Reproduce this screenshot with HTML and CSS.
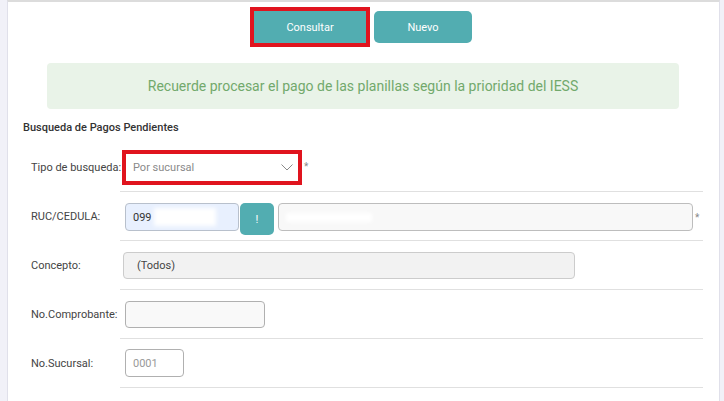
FILE: index.html
```html
<!DOCTYPE html>
<html lang="es">
<head>
<meta charset="utf-8">
<link rel="stylesheet" href="styles.css">
</head>
<body>
<div class="panel">
  <div class="actions">
    <button class="btn btn-main">Consultar</button>
    <button class="btn btn-new">Nuevo</button>
  </div>
  <div class="alert">Recuerde procesar el pago de las planillas según la prioridad del IESS</div>
  <div class="title">Busqueda de Pagos Pendientes</div>
  <div class="form">
    <div class="row">
      <div class="label">Tipo de busqueda:</div>
      <div class="field">
        <div class="select">
          <span>Por sucursal</span>
          <svg class="chev" width="12" height="7" viewBox="0 0 12 7"><path d="M0.5 0.5 L6 6 L11.5 0.5" fill="none" stroke="#8a8a8a" stroke-width="1"/></svg>
        </div>
        <span class="req">*</span>
      </div>
    </div>
    <div class="row">
      <div class="label">RUC/CEDULA:</div>
      <div class="field field-top">
        <div class="inp inp-ruc"><span>099</span><span class="blur blur-a"></span></div>
        <button class="btn btn-bang">!</button>
        <div class="inp inp-name"><span class="blur blur-b"></span></div>
        <span class="req req-2">*</span>
      </div>
    </div>
    <div class="row">
      <div class="label">Concepto:</div>
      <div class="field">
        <div class="inp inp-concepto">(Todos)</div>
      </div>
    </div>
    <div class="row">
      <div class="label">No.Comprobante:</div>
      <div class="field">
        <div class="inp inp-comp"></div>
      </div>
    </div>
    <div class="row">
      <div class="label">No.Sucursal:</div>
      <div class="field">
        <div class="inp inp-suc">0001</div>
      </div>
    </div>
  </div>
</div>
</body>
</html>
```

FILE: styles.css
```css
* { box-sizing: border-box; }
html, body { margin: 0; padding: 0; }
body {
  background: #f1f1f8;
  font-family: Roboto, "Liberation Sans", Arial, sans-serif;
  font-size: 11px;
  color: #444;
  height: 401px;
  overflow: hidden;
}
.panel {
  margin: 0 4px 0 7px;
  background: #fff;
  border-top: 2px solid #dcdcdc;
  border-left: 1px solid #e0e0ea;
  border-right: 1px solid #e0e0ea;
  height: 401px;
  padding: 0 16px 0 0;
}
.actions {
  display: flex;
  justify-content: center;
  align-items: center;
  padding-top: 5px;
  padding-left: 11px;
}
.btn {
  font-family: Roboto, "Liberation Sans", Arial, sans-serif;
  background: #52adb1;
  color: #fff;
  border: none;
  font-size: 11px;
  cursor: pointer;
  padding: 0;
}
.btn-main {
  width: 120px;
  height: 40px;
  border: 4px solid #e0141e;
}
.btn-new {
  width: 98px;
  height: 32px;
  border-radius: 5px;
  margin-left: 4px;
}
.alert {
  margin: 16px 24px 0 39px;
  height: 46px;
  background: #e9f3e8;
  border-radius: 4px;
  color: #72a96c;
  font-size: 14px;
  display: flex;
  align-items: center;
  justify-content: center;
}
.title {
  margin: 12px 0 8px 15px;
  line-height: 14px;
  font-weight: 500;
  color: #333;
}
.form { padding-left: 23px; }
.row {
  display: flex;
  align-items: stretch;
}
.label {
  width: 89px;
  white-space: nowrap;
  display: flex;
  align-items: center;
  padding-bottom: 1px;
  color: #444;
}
.field {
  flex: 1;
  height: 49px;
  border-bottom: 1px solid #e0e0e0;
  display: flex;
  align-items: center;
}
.field-top {
  align-items: flex-start;
  padding-top: 11px;
}
.select {
  margin-left: 2px;
  width: 180px;
  height: 35px;
  border: 4px solid #e0141e;
  background: #fff;
  display: flex;
  align-items: center;
  justify-content: space-between;
  padding: 0 5px 0 7px;
  color: #8a8a8a;
}
.chev { margin-top: 1px; }
.req {
  margin-left: 2px;
  color: #888;
  font-size: 10px;
  margin-top: -2px;
}
.req-2 { margin-top: 9px; }
.inp {
  height: 28px;
  border: 1px solid #c4c4c4;
  border-radius: 4px;
  display: flex;
  align-items: center;
  padding: 0 8px 0 7px;
  color: #333;
  background: #fff;
  overflow: hidden;
}
.inp-ruc {
  margin-left: 5px;
  width: 114px;
  background: #e8f0fe;
  border-color: #b8c0cc;
}
.blur {
  display: inline-block;
  background: #fff;
  filter: blur(2px);
}
.blur-a { width: 62px; height: 18px; margin-left: 2px; }
.blur-b { width: 86px; height: 9px; }
.btn-bang {
  margin-left: 1px;
  width: 34px;
  height: 32px;
  border-radius: 5px;
  font-size: 11px;
}
.inp-name {
  margin-left: 4px;
  width: 415px;
  background: #f8f8f8;
  border-color: #bdbdbd;
}
.inp-concepto {
  margin-left: 3px;
  width: 452px;
  height: 27px;
  background: #f2f2f2;
  border-color: #cccccc;
  padding-left: 13px;
  color: #444;
}
.inp-comp {
  margin-left: 5px;
  width: 140px;
  height: 27px;
  background: #f9f9f9;
  border-color: #b0b0b0;
}
.inp-suc {
  margin-left: 5px;
  width: 59px;
  background: #fff;
  border-color: #b0b0b0;
  color: #999;
}
```
